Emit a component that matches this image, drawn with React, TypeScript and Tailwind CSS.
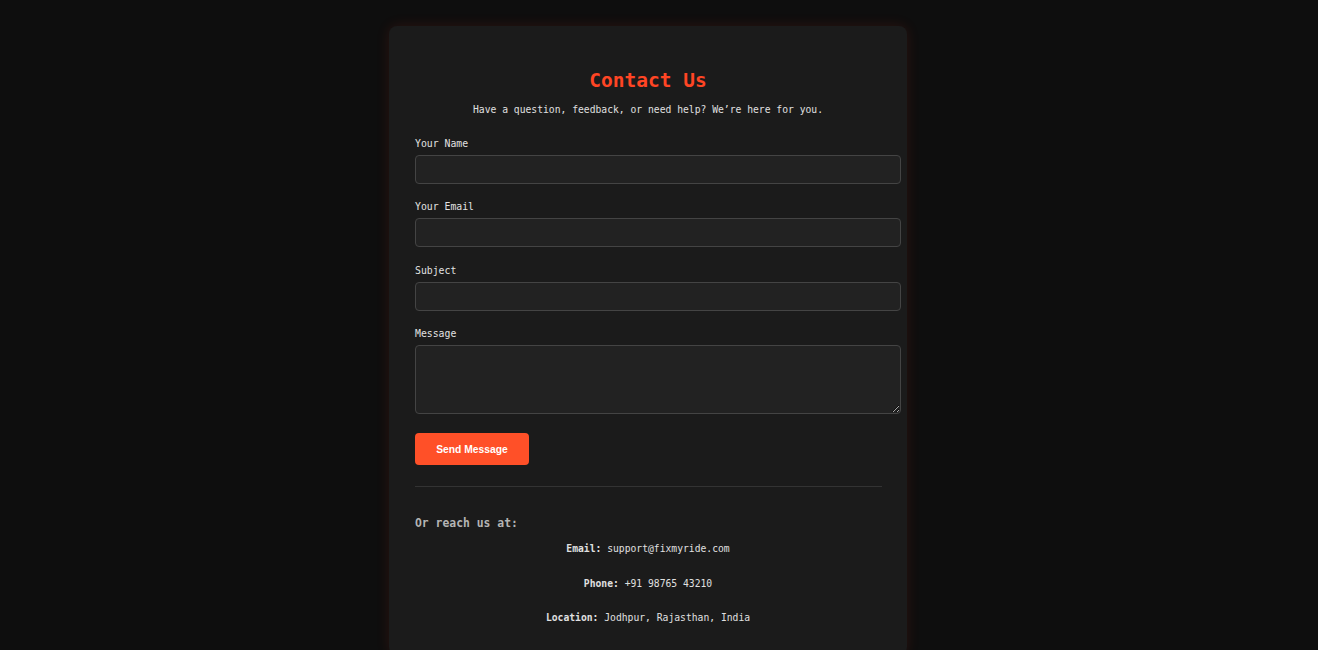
import React from 'react'

const mono = { fontFamily: '"DejaVu Sans Mono", "Liberation Mono", monospace' }

function Field({ label, textarea }: { label: string; textarea?: boolean }) {
  return (
    <div className="mb-[16.4px]">
      <label className="block text-[9.8px] leading-[14px] text-[#e2e2e2] mb-[4px]">{label}</label>
      {textarea ? (
        <textarea
          className="block box-content w-full h-[51px] px-[9px] py-[8px] bg-[#222222] border border-[#444444] rounded-[4px] text-[#eee] outline-none"
          style={mono}
        />
      ) : (
        <input
          type="text"
          className="block box-content w-full h-[11px] px-[9px] py-[8px] bg-[#222222] border border-[#444444] rounded-[4px] text-[#eee] outline-none"
          style={mono}
        />
      )}
    </div>
  )
}

export default function App() {
  return (
    <div className="min-h-[650px] bg-[#0e0e0e] pt-[26px] pr-[22px] overflow-hidden" style={mono}>
      <div className="mx-auto w-[518px] rounded-lg bg-[#1b1b1b] px-[26px] pt-[43px] pb-[30px] shadow-[0_0_14px_rgba(255,60,30,0.12)]">
        <h2 className="text-center text-[19.5px] leading-[24px] font-bold text-[#ff4524]">Contact Us</h2>
        <p className="mt-[10px] text-center text-[9.7px] leading-[14px] text-[#e0e0e0]">
          Have a question, feedback, or need help? We’re here for you.
        </p>

        <form className="mt-[20px]" onSubmit={(e) => e.preventDefault()}>
          <Field label="Your Name" />
          <Field label="Your Email" />
          <Field label="Subject" />
          <Field label="Message" textarea />
          <button
            type="submit"
            className="mt-[2.5px] h-[32px] w-[114px] rounded-[4px] bg-[#ff5028] pt-[2px] text-white text-[10.3px] font-bold"
            style={{ fontFamily: '"Liberation Sans", Arial, sans-serif' }}
          >
            Send Message
          </button>
        </form>

        <hr className="mt-[21px] mr-[-1px] border-0 border-t border-[#333333]" />

        <h3 className="mt-[28px] text-[11.4px] leading-[16px] font-bold text-[#b4b4b4]">Or reach us at:</h3>
        <div className="mt-[11px] text-center text-[9.7px] leading-[14px] text-[#e0e0e0] flex flex-col gap-[20.5px]">
          <p>
            <span className="font-bold">Email:</span> support@fixmyride.com
          </p>
          <p>
            <span className="font-bold">Phone:</span> +91 98765 43210
          </p>
          <p>
            <span className="font-bold">Location:</span> Jodhpur, Rajasthan, India
          </p>
        </div>
      </div>
    </div>
  )
}
